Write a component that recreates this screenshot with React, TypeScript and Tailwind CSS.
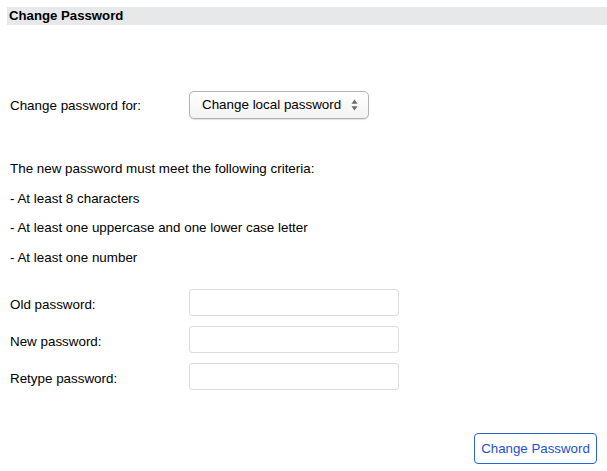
import React from "react";

const criteria = [
  "The new password must meet the following criteria:",
  "- At least 8 characters",
  "- At least one uppercase and one lower case letter",
  "- At least one number",
];

const fields = ["Old password:", "New password:", "Retype password:"];

function UpDownArrows() {
  return (
    <svg width="7" height="12" viewBox="0 0 7 12" className="shrink-0">
      <path d="M3.5 0.5 L6.5 4.8 L0.5 4.8 Z" fill="#6b6b6b" />
      <path d="M3.5 11.5 L6.5 7.2 L0.5 7.2 Z" fill="#6b6b6b" />
    </svg>
  );
}

export default function App() {
  return (
    <div className="min-h-[471px] bg-white pt-[7px] font-['Liberation_Sans',Arial,sans-serif] text-[13.4px] text-black">
      <div className="ml-[7px] h-[18px] bg-[#e7e8e9] pl-[2px] text-[13.2px] font-bold leading-[18px]">
        Change Password
      </div>

      <div className="px-[10px]">
        <div className="mt-[66px] flex items-center">
          <div className="w-[179px] pt-[2px]">Change password for:</div>
          <button
            type="button"
            className="flex h-[28px] w-[180px] items-center justify-between rounded-[5px] border border-[#b1b1b1] bg-gradient-to-b from-white to-[#f3f3f3] pl-[12px] pr-[10px] text-[13.4px] text-black shadow-[0_1px_1px_rgba(0,0,0,0.12)]"
          >
            <span>Change local password</span>
            <UpDownArrows />
          </button>
        </div>

        <div className="mt-[35px]">
          {criteria.map((line) => (
            <p key={line} className="leading-[29.5px]">
              {line}
            </p>
          ))}
        </div>

        <div className="mt-[17px] flex flex-col gap-[10px]">
          {fields.map((label) => (
            <div key={label} className="flex items-center">
              <label className="w-[179px] pt-[6px]">{label}</label>
              <input
                type="password"
                className="h-[27px] w-[210px] rounded-[3px] border border-[#dcdcdc] bg-white px-2 outline-none"
              />
            </div>
          ))}
        </div>

        <div className="mt-[43px] flex justify-end">
          <button
            type="button"
            className="h-[31px] w-[123px] rounded-[4px] border border-[#2a64d6] bg-white text-[13.3px] text-[#2350d0]"
          >
            Change Password
          </button>
        </div>
      </div>
    </div>
  );
}
